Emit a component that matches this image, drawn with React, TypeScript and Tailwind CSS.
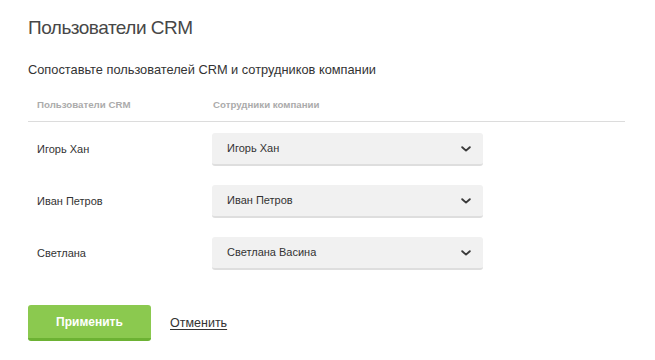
const rows = [
  { user: "Игорь Хан", employee: "Игорь Хан" },
  { user: "Иван Петров", employee: "Иван Петров" },
  { user: "Светлана", employee: "Светлана Васина" },
];

function Chevron() {
  return (
    <svg width="10" height="6" viewBox="0 0 10 6" fill="none">
      <path d="M1.2 1.2L5 4.6L8.8 1.2" stroke="#3a3a3a" strokeWidth="1.9" strokeLinecap="round" strokeLinejoin="round" />
    </svg>
  );
}

export default function App() {
  return (
    <div className="w-[655px] h-[360px] bg-white px-[28px] pt-[16px] font-['Liberation_Sans',Arial,sans-serif]">
      <h1 className="text-[19px] leading-[24px] tracking-[-0.5px] text-[#474747]">Пользователи CRM</h1>

      <p className="mt-[22px] text-[12.8px] leading-[16px] text-[#333]">
        Сопоставьте пользователей CRM и сотрудников компании
      </p>

      <div className="mt-[21px] w-[597px]">
        <div className="flex border-b border-[#dcdcdc] pb-[10px] pl-[9px] text-[9.7px] font-bold leading-[12px] text-[#ababab]">
          <div className="w-[176px]">Пользователи CRM</div>
          <div>Сотрудники компании</div>
        </div>

        <div className="mt-[11px] flex flex-col gap-[19px]">
          {rows.map((r) => (
            <div key={r.user} className="flex items-center pl-[9px]">
              <div className="w-[175px] text-[11px] text-[#333]">{r.user}</div>
              <div className="flex h-[33px] w-[271px] items-center justify-between rounded-[3px] border-b-2 border-[#dedede] bg-[#f1f1f1] pl-[15px] pr-[12px] text-[11px] text-[#333]">
                <span>{r.employee}</span>
                <Chevron />
              </div>
            </div>
          ))}
        </div>
      </div>

      <div className="mt-[35px] flex items-center gap-[19px]">
        <button className="h-[36px] w-[123px] rounded-[3px] border-b-[3px] border-[#6cb233] bg-[#8bc94f] text-[12px] font-bold text-white">
          Применить
        </button>
        <a href="#" className="text-[12.5px] text-[#333] underline underline-offset-2">
          Отменить
        </a>
      </div>
    </div>
  );
}
